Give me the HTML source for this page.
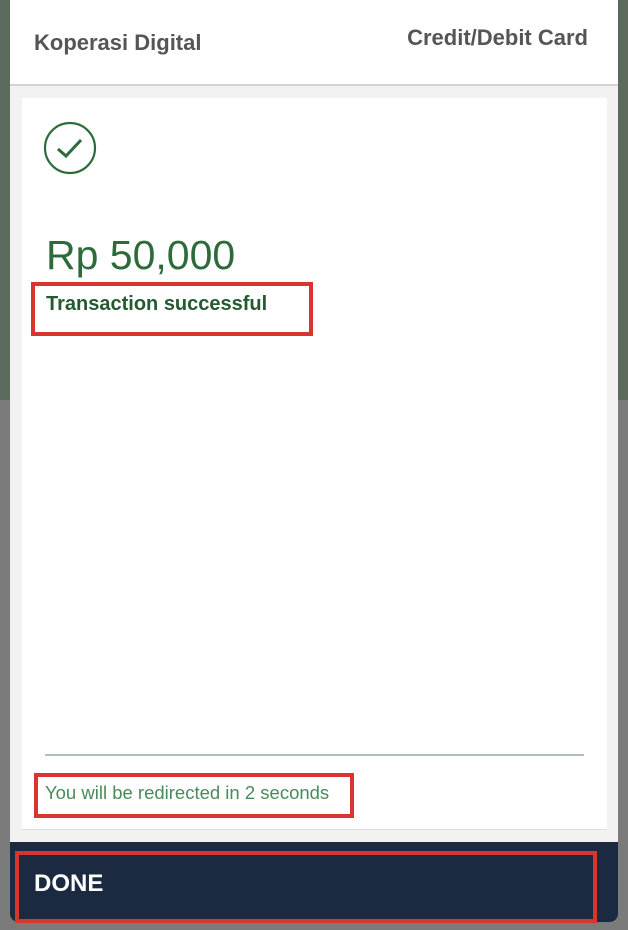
<!DOCTYPE html>
<html><head><style>
body{margin:0;width:628px;height:930px;position:relative;overflow:hidden;background:#7b7b7b;font-family:"Liberation Sans",sans-serif}
.bgtop{position:absolute;left:0;top:0;width:628px;height:400px;background:#5b6a5b}
.modal{position:absolute;left:10px;top:0;width:608px;height:922px;background:#f2f2f2;border-radius:0 0 8px 8px;overflow:hidden}
.hdr{position:absolute;left:0;top:0;width:608px;height:84px;background:#fff;border-bottom:2px solid #d4d4d4}
.card{position:absolute;left:12px;top:98px;width:585px;height:731px;background:#fff;border-bottom:1px solid #ddd}
.done{position:absolute;left:0;top:842px;width:608px;height:80px;background:#1b2a40}
.t{position:absolute;white-space:nowrap}
.rb{position:absolute;border:4px solid #d93530;box-sizing:border-box}
</style></head><body>
<div class="bgtop"></div>
<div class="modal">
<div class="hdr">
<div class="t" style="left:24px;top:30px;font-size:22px;font-weight:bold;color:#555">Koperasi Digital</div>
<div class="t" style="right:30px;top:25px;font-size:22px;font-weight:bold;color:#555">Credit/Debit Card</div>
</div>
<div class="card">
<svg style="position:absolute;left:21px;top:23px" width="54" height="54" viewBox="0 0 54 54"><circle cx="27" cy="27" r="25" fill="none" stroke="#2e6b3a" stroke-width="2.2"/><path d="M15 28 L23 35 L38 19" fill="none" stroke="#2e6b3a" stroke-width="3"/></svg>
<div class="t" style="left:24px;top:134px;font-size:41px;color:#2e6b3a">Rp 50,000</div>
<div class="t" style="left:24px;top:195px;font-size:20px;font-weight:bold;color:#245a2f">Transaction successful</div>
<div style="position:absolute;left:23px;top:656px;width:539px;height:2px;background:#b4bdb7"></div>
<div class="t" style="left:23px;top:684px;font-size:18.5px;color:#4a8a5a">You will be redirected in 2 seconds</div>
</div>
<div class="done"><div class="t" style="left:24px;top:28px;font-size:24px;font-weight:bold;color:#fff">DONE</div></div>
</div>
<div class="rb" style="left:31px;top:282px;width:282px;height:54px"></div>
<div class="rb" style="left:34px;top:773px;width:320px;height:45px"></div>
<div class="rb" style="left:15px;top:851px;width:582px;height:72px"></div>
</body></html>
